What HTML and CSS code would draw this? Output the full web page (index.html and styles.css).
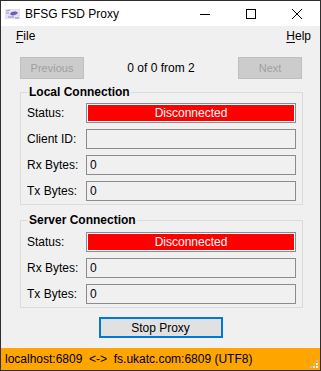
FILE: index.html
```html
<!DOCTYPE html>
<html lang="en">
<head>
    <meta charset="UTF-8">
    <meta name="viewport" content="width=device-width, initial-scale=1.0">
    <title>BFSG FSD Proxy</title>
    <link rel="stylesheet" href="styles.css">
</head>
<body>
    <div class="window">
        <div class="titlebar">
            <svg class="app-icon" width="16" height="14" viewBox="0 0 16 14">
                <rect x="0" y="2" width="15" height="10" fill="#e4e2f4"/>
                <path d="M1 4 L5 3 M1 6 L4 6" stroke="#9d97c9" stroke-width="1"/>
                <path d="M5 7 C7 4, 11 4, 13 6 C11 8, 8 9, 6 8 Z" fill="#6a5fb8"/>
                <path d="M3 10 L9 10 M10 11 L14 11" stroke="#8b84c4" stroke-width="1"/>
            </svg>
            <span class="title">BFSG FSD Proxy</span>
            <div class="controls">
                <span class="ctl">
                    <svg width="10" height="10" viewBox="0 0 10 10"><path d="M0 5.5 H10" stroke="#000" stroke-width="1"/></svg>
                </span>
                <span class="ctl">
                    <svg width="10" height="10" viewBox="0 0 10 10"><rect x="0.5" y="0.5" width="9" height="9" fill="none" stroke="#000" stroke-width="1"/></svg>
                </span>
                <span class="ctl">
                    <svg width="10" height="10" viewBox="0 0 10 10"><path d="M0 0 L10 10 M10 0 L0 10" stroke="#000" stroke-width="1"/></svg>
                </span>
            </div>
        </div>

        <div class="menubar">
            <span class="menu"><u>F</u>ile</span>
            <span class="menu"><u>H</u>elp</span>
        </div>

        <div class="content">
            <div class="nav-row">
                <button class="btn" disabled>Previous</button>
                <span class="counter">0 of 0 from 2</span>
                <button class="btn" disabled>Next</button>
            </div>

            <fieldset class="group">
                <legend>Local Connection</legend>
                <div class="row">
                    <span class="lbl">Status:</span>
                    <span class="field status-off">Disconnected</span>
                </div>
                <div class="row">
                    <span class="lbl">Client ID:</span>
                    <span class="field"></span>
                </div>
                <div class="row">
                    <span class="lbl">Rx Bytes:</span>
                    <span class="field">0</span>
                </div>
                <div class="row">
                    <span class="lbl">Tx Bytes:</span>
                    <span class="field">0</span>
                </div>
            </fieldset>

            <fieldset class="group server">
                <legend>Server Connection</legend>
                <div class="row">
                    <span class="lbl">Status:</span>
                    <span class="field status-off">Disconnected</span>
                </div>
                <div class="row">
                    <span class="lbl">Rx Bytes:</span>
                    <span class="field">0</span>
                </div>
                <div class="row">
                    <span class="lbl">Tx Bytes:</span>
                    <span class="field">0</span>
                </div>
            </fieldset>

            <div class="stop-row">
                <button class="btn stop">Stop Proxy</button>
            </div>
        </div>

        <div class="statusbar">
            <span>localhost:6809&nbsp;&nbsp;&lt;-&gt;&nbsp;&nbsp;fs.ukatc.com:6809 (UTF8)</span>
            <svg class="grip" width="10" height="10" viewBox="0 0 10 10">
                <rect x="7" y="1" width="2" height="2" fill="#b8b8d8"/>
                <rect x="4" y="4" width="2" height="2" fill="#b8b8d8"/>
                <rect x="7" y="4" width="2" height="2" fill="#eeeeee"/>
                <rect x="1" y="7" width="2" height="2" fill="#b8b8d8"/>
                <rect x="4" y="7" width="2" height="2" fill="#eeeeee"/>
                <rect x="7" y="7" width="2" height="2" fill="#eeeeee"/>
            </svg>
        </div>
    </div>
</body>
</html>
```

FILE: styles.css
```css
body {
    margin: 0;
    padding: 0;
    font-family: "Liberation Sans", Arial, sans-serif;
    font-size: 11px;
    color: #000;
}

.window {
    width: 321px;
    height: 371px;
    box-sizing: border-box;
    border: 1px solid #2f2f2f;
    background-color: #f0f0f0;
    display: flex;
    flex-direction: column;
}

/* title bar */
.titlebar {
    height: 25px;
    background-color: #fff;
    display: flex;
    align-items: center;
}

.app-icon {
    margin-left: 4px;
    margin-right: 4px;
}

.title {
    font-size: 12px;
    flex: 1;
}

.controls {
    display: flex;
    height: 100%;
}

.ctl {
    width: 46px;
    display: flex;
    align-items: center;
    justify-content: center;
}

/* menu */
.menubar {
    height: 20px;
    display: flex;
    justify-content: space-between;
    align-items: center;
    padding: 0 9px 0 15px;
}

.menu {
    font-size: 12px;
}

.menu u {
    text-decoration-thickness: 1px;
    text-underline-offset: 2px;
}

/* main area */
.content {
    padding: 11px 18px 0 19px;
    display: flex;
    flex-direction: column;
}

.nav-row {
    display: flex;
    justify-content: space-between;
    align-items: center;
}

.btn {
    font-family: inherit;
    font-size: 11px;
    height: 22px;
    width: 64px;
    padding: 0;
    border: 1px solid #bfbfbf;
    background-color: #cccccc;
    color: #a0a0a0;
}

.counter {
    font-size: 12px;
}

.group {
    margin: 7px 0 0 0;
    padding: 4px 6px 3px 6px;
    border: 1px solid #dcdcdc;
    width: 283px;
    box-sizing: border-box;
    display: flex;
    flex-direction: column;
    gap: 6px;
}

.group.server {
    margin-top: 9px;
    padding-top: 5px;
}

.group legend {
    font-weight: bold;
    font-size: 12px;
    line-height: 13px;
    padding: 0 1px;
    margin-left: 1px;
}

.row {
    display: flex;
    align-items: center;
}

.lbl {
    width: 59px;
    font-size: 12px;
}

.field {
    width: 210px;
    height: 20px;
    box-sizing: border-box;
    border: 1px solid #8c8c8c;
    background-color: #f0f0f0;
    font-size: 12px;
    line-height: 18px;
    padding-left: 3px;
}

.status-off {
    background-color: #ff0000;
    color: #fff;
    text-align: center;
    padding-left: 0;
    box-shadow: inset 0 0 0 1px #fff;
}

.stop-row {
    display: flex;
    justify-content: center;
    margin-top: 9px;
    margin-left: -1px;
}

.btn.stop {
    width: 124px;
    height: 21px;
    border: 2px solid #0078d7;
    background-color: #e1e1e1;
    color: #000;
    font-size: 12px;
}

/* status bar */
.statusbar {
    margin-top: auto;
    height: 22px;
    background-color: #ffa500;
    display: flex;
    align-items: center;
    justify-content: space-between;
    padding-left: 4px;
    font-size: 12px;
}

.grip {
    align-self: flex-end;
    margin: 0 1px 1px 0;
}
```
